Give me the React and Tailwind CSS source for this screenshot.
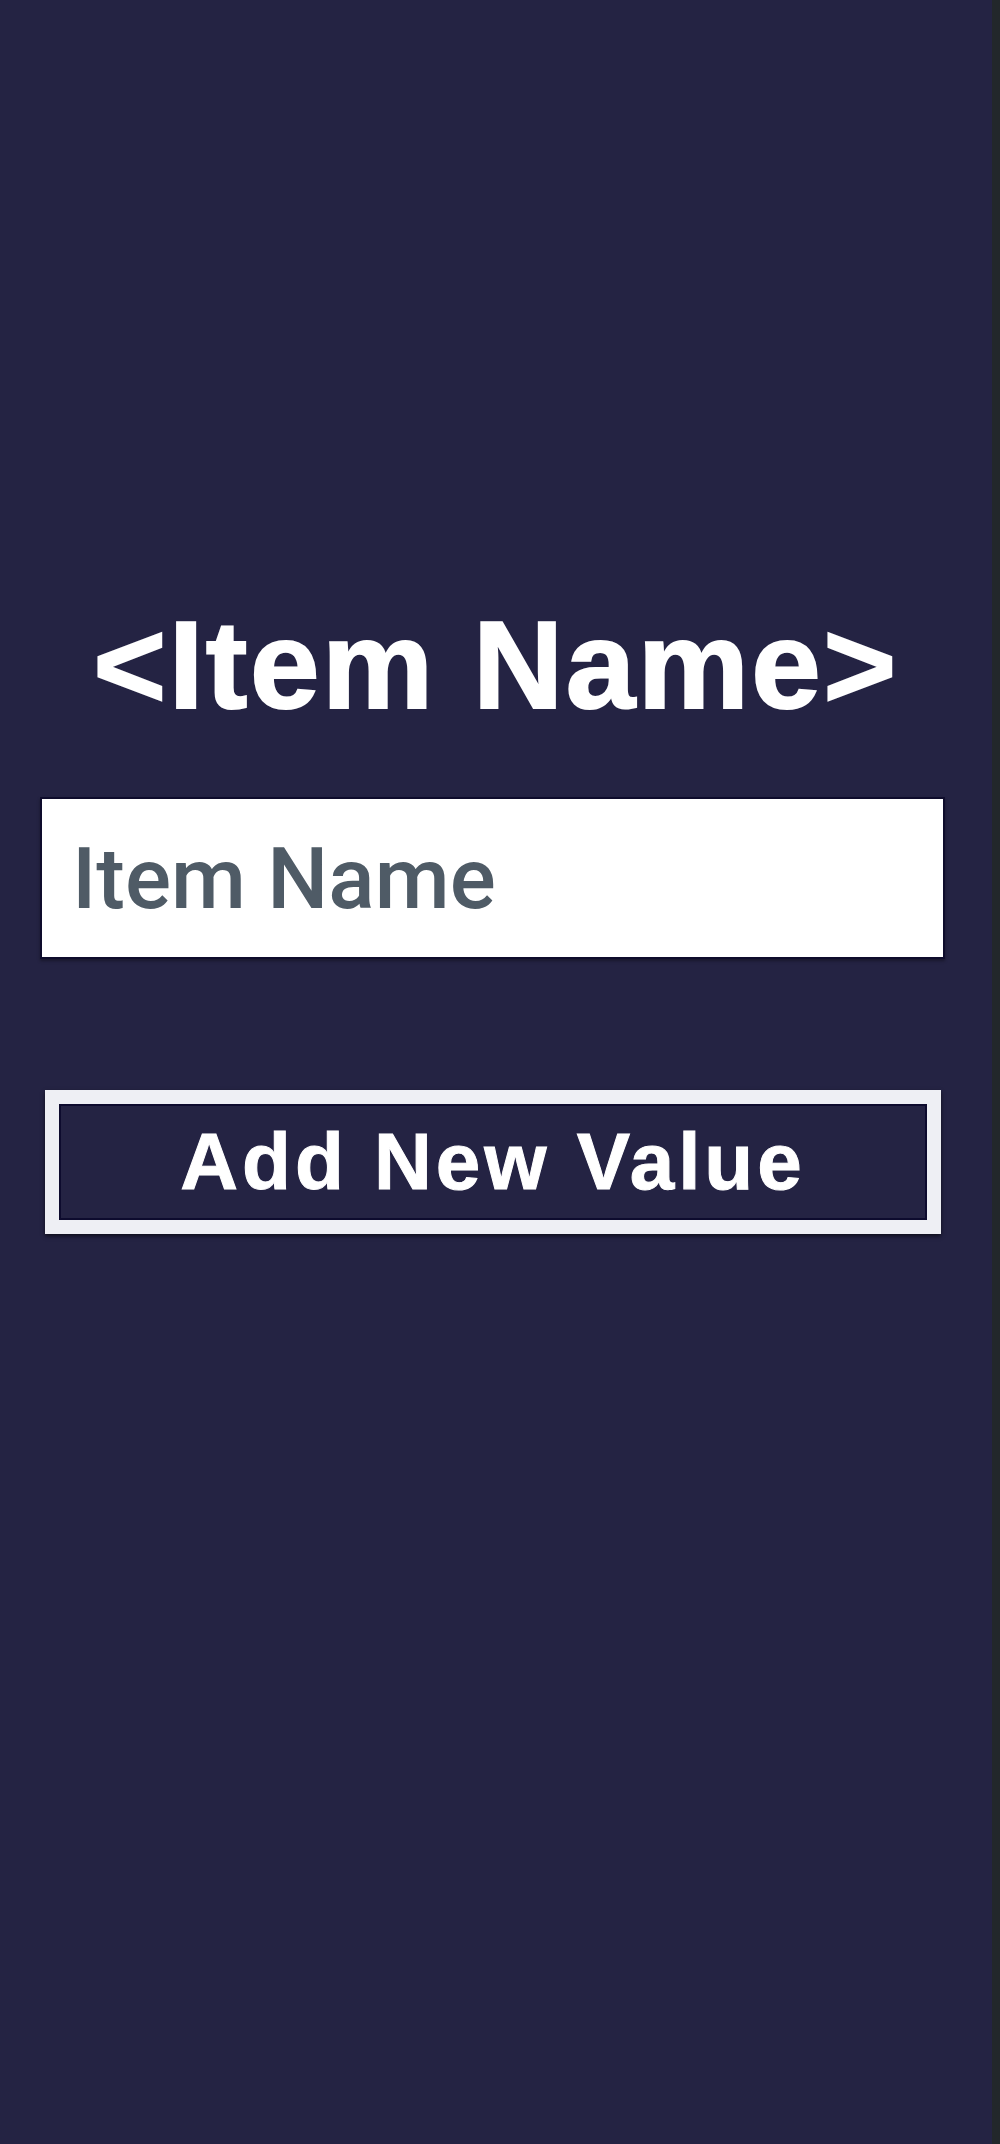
export default function App() {
  return (
    <div className="flex w-full h-[2144px] bg-[#22272b]">
      <div className="w-[992px] bg-[#242343] flex flex-col px-[40px] pt-[590px]">
        <h1 className="text-center text-white font-bold text-[125px] leading-[150px] tracking-[2.5px] font-['Liberation_Sans',Arial,sans-serif] [-webkit-text-stroke:2px_white]">
          &lt;Item Name&gt;
        </h1>
        <input
          type="text"
          placeholder="Item Name"
          className="mt-[57px] w-[905px] h-[162px] bg-white border-2 border-[#0e0c2c] px-[30px] text-[86px] font-medium text-[#4f5b66] placeholder:text-[#4f5b66] font-['Roboto',Arial,sans-serif] outline-none shadow-[0_2px_3px_rgba(0,0,0,0.35)]"
        />
        <button
          type="button"
          className="mt-[131px] ml-[5px] w-[896px] h-[144px] border-[14px] border-[#eeeff4] bg-[#242343] flex items-center justify-center shadow-[0_2px_4px_rgba(0,0,0,0.6)]"
        >
          <span className="flex w-full h-full items-center justify-center border-2 border-[#0d0b2e] text-white font-bold text-[80px] tracking-[4px] font-['Liberation_Sans',Arial,sans-serif] [-webkit-text-stroke:1px_white]">
            Add New Value
          </span>
        </button>
      </div>
      <div className="flex-1" />
    </div>
  );
}
